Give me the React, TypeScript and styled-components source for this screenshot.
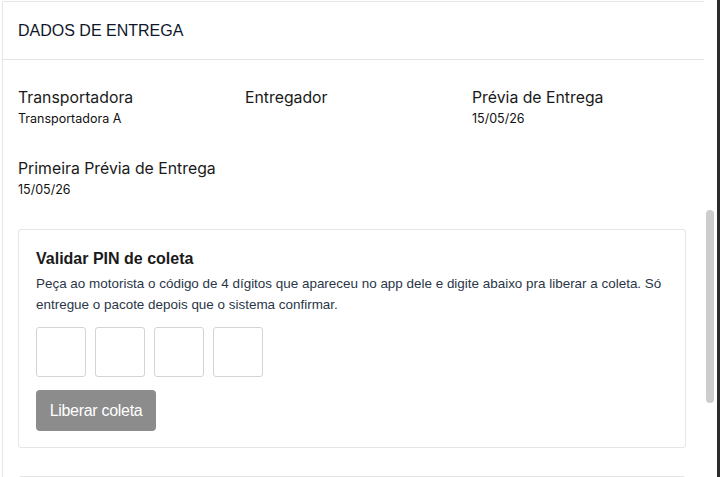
import React from 'react';
import styled, { createGlobalStyle } from 'styled-components';

const GlobalStyle = createGlobalStyle`
  html, body {
    margin: 0;
    padding: 0;
    background: #fff;
    overflow: hidden;
  }
  * { box-sizing: border-box; }
`;

const Page = styled.div`
  display: flex;
  height: 477px;
  width: 720px;
  overflow: hidden;
`;

const Main = styled.div`
  flex: 1;
  min-width: 0;
  overflow: hidden;
`;

const ScrollTrack = styled.div`
  width: 13px;
  padding: 210px 3px 0 2px;
  background: #fff;
`;

const ScrollThumb = styled.div`
  width: 8px;
  height: 193px;
  border-radius: 4px;
  background: #cdcdcd;
`;

const DarkEdge = styled.div`
  width: 3px;
  background: #2b2b2b;
`;

const Section = styled.section`
  margin: 1px 0 0 2px;
  border: 1px solid #e5e5e5;
  border-right: none;
  border-bottom: none;
`;

const SectionHeader = styled.div`
  height: 58px;
  display: flex;
  align-items: center;
  padding-left: 15px;
  border-bottom: 1px solid #e5e5e5;
  font-family: 'Liberation Sans', Arial, sans-serif;
  font-size: 16px;
  color: #0f172a;
`;

const SectionBody = styled.div`
  padding: 28px 18px 0 15px;
`;

const FieldGrid = styled.div`
  display: grid;
  grid-template-columns: repeat(3, 1fr);
  column-gap: 13px;
  row-gap: 32px;
`;

const Field = styled.div`
  display: flex;
  flex-direction: column;
  gap: 3px;
  font-family: Inter, 'Noto Sans', sans-serif;
`;

const FieldLabel = styled.div`
  font-size: 15.8px;
  line-height: 20px;
  font-weight: 400;
  color: #1a1a1a;
`;

const FieldValue = styled.div`
  font-size: 12.5px;
  line-height: 16px;
  color: #111;
`;

const PinCard = styled.div`
  margin-top: 31px;
  border: 1px solid #e5e5e5;
  border-radius: 3px;
  padding: 19px 17px 16px;
  font-family: 'Liberation Sans', Arial, sans-serif;
`;

const PinTitle = styled.h3`
  margin: 0;
  font-size: 16px;
  line-height: 20px;
  font-weight: 700;
  color: #1a1a1a;
`;

const PinText = styled.p`
  margin: 4px 0 0;
  font-size: 13.45px;
  line-height: 21px;
  color: #2a3648;
`;

const PinRow = styled.div`
  display: flex;
  gap: 9px;
  margin-top: 12px;
`;

const PinInput = styled.input`
  width: 50px;
  height: 50px;
  border: 1px solid #d4d4d8;
  border-radius: 3px;
  background: #fff;
  text-align: center;
  font-size: 20px;
  font-family: 'Liberation Sans', Arial, sans-serif;
  outline: none;
`;

const ReleaseButton = styled.button`
  display: block;
  margin-top: 13px;
  width: 120px;
  height: 41px;
  border: none;
  border-radius: 4px;
  background: #8c8c8c;
  color: #fff;
  font-family: 'Liberation Sans', Arial, sans-serif;
  font-size: 16px;
  letter-spacing: -0.3px;
  cursor: not-allowed;
`;

const NextCard = styled.div`
  margin-top: 28px;
  height: 20px;
  border: 1px solid #e5e5e5;
  border-radius: 3px;
`;

const fields = [
  { label: 'Transportadora', value: 'Transportadora A' },
  { label: 'Entregador', value: '' },
  { label: 'Prévia de Entrega', value: '15/05/26' },
  { label: 'Primeira Prévia de Entrega', value: '15/05/26' },
];

export default function App() {
  return (
    <>
      <GlobalStyle />
      <Page>
        <Main>
          <Section>
            <SectionHeader>DADOS DE ENTREGA</SectionHeader>
            <SectionBody>
              <FieldGrid>
                {fields.map(f => (
                  <Field key={f.label}>
                    <FieldLabel>{f.label}</FieldLabel>
                    {f.value && <FieldValue>{f.value}</FieldValue>}
                  </Field>
                ))}
              </FieldGrid>

              <PinCard>
                <PinTitle>Validar PIN de coleta</PinTitle>
                <PinText>
                  Peça ao motorista o código de 4 dígitos que apareceu no app dele e digite abaixo pra liberar a
                  coleta. Só entregue o pacote depois que o sistema confirmar.
                </PinText>
                <PinRow>
                  {[0, 1, 2, 3].map(i => (
                    <PinInput key={i} maxLength={1} inputMode="numeric" />
                  ))}
                </PinRow>
                <ReleaseButton disabled>Liberar coleta</ReleaseButton>
              </PinCard>

              <NextCard />
            </SectionBody>
          </Section>
        </Main>
        <ScrollTrack>
          <ScrollThumb />
        </ScrollTrack>
        <DarkEdge />
      </Page>
    </>
  );
}
